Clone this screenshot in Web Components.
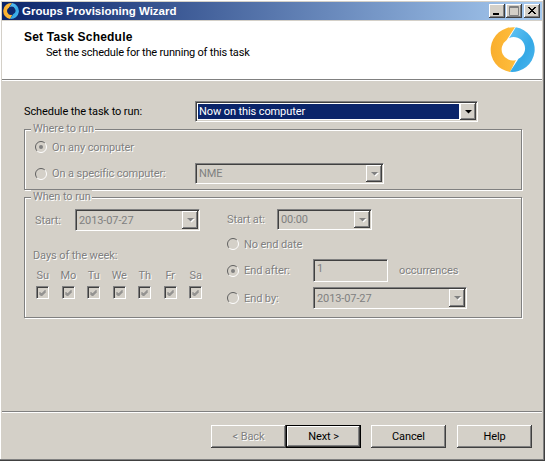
<!DOCTYPE html>
<html>
<head>
<meta charset="utf-8">
<title>Groups Provisioning Wizard</title>
<style>
  html, body { margin: 0; padding: 0; background: #d4d0c8; }
  body { font: 11px Roboto, "Liberation Sans", Arial, sans-serif; color: #000; letter-spacing: -.1px; }
</style>
</head>
<body>

<wiz-window>
  <wiz-titlebar slot="title">Groups Provisioning Wizard</wiz-titlebar>
  <wiz-header slot="header" heading="Set Task Schedule">Set the schedule for the running of this task</wiz-header>

  <schedule-row>
    <span slot="label">Schedule the task to run:</span>
    <wiz-combo slot="combo" selected value="Now on this computer" style="width:283px;height:21px"></wiz-combo>
  </schedule-row>

  <wiz-group legend="Where to run">
    <where-rows>
      <wiz-radio slot="any" checked>On any computer</wiz-radio>
      <wiz-radio slot="specific">On a specific computer:</wiz-radio>
      <wiz-combo slot="computer" disabled value="NME" style="width:189px;height:21px"></wiz-combo>
    </where-rows>
  </wiz-group>

  <wiz-group legend="When to run">
    <when-rows>
      <wiz-combo slot="start" disabled value="2013-07-27" style="width:125px;height:22px"></wiz-combo>
      <wiz-day slot="day">Su</wiz-day>
      <wiz-day slot="day">Mo</wiz-day>
      <wiz-day slot="day">Tu</wiz-day>
      <wiz-day slot="day">We</wiz-day>
      <wiz-day slot="day">Th</wiz-day>
      <wiz-day slot="day">Fr</wiz-day>
      <wiz-day slot="day">Sa</wiz-day>
      <wiz-combo slot="startat" disabled value="00:00" style="width:95px;height:21px"></wiz-combo>
      <wiz-radio slot="noend">No end date</wiz-radio>
      <wiz-radio slot="after" checked>End after:</wiz-radio>
      <wiz-text slot="count" value="1"></wiz-text>
      <wiz-radio slot="by">End by:</wiz-radio>
      <wiz-combo slot="bydate" disabled value="2013-07-27" style="width:154px;height:22px"></wiz-combo>
    </when-rows>
  </wiz-group>

  <wiz-footer slot="footer">
    <wiz-btn disabled>&lt; Back</wiz-btn>
    <wiz-btn default style="margin-right:10px">Next &gt;</wiz-btn>
    <wiz-btn style="margin-right:11px">Cancel</wiz-btn>
    <wiz-btn>Help</wiz-btn>
  </wiz-footer>
</wiz-window>

<script>
const uiFont = '11px Roboto, "Liberation Sans", Arial, sans-serif'

const logoSvg = `
  <svg viewBox="0 0 45 45" width="100%" height="100%" style="display:block">
    <defs>
      <linearGradient id="o" x1="0" y1="0" x2="1" y2="0">
        <stop offset="0" stop-color="#f9ae2e"/><stop offset="1" stop-color="#ffbe3c"/>
      </linearGradient>
      <linearGradient id="b" x1="0" y1="0" x2="1" y2="1">
        <stop offset="0" stop-color="#62c4f4"/><stop offset="0.6" stop-color="#35a9e6"/><stop offset="1" stop-color="#4db6ee"/>
      </linearGradient>
    </defs>
    <path fill="url(#o)" d="M25 .2A22.5 22.5 0 0 0 20 44.9L26 32.9A11 11 0 0 1 16.500 13.300Z"/>
    <path fill="url(#b)" d="M20 44.800A22.5 22.5 0 0 0 25.800 .2L19 11.200A11 11 0 0 1 28.500 31.700Z"/>
  </svg>`

class WizWindow extends HTMLElement {
  constructor () {
    super()
    this.attachShadow({ mode: 'open' }).innerHTML = `
    <style>
      :host{
        background: #d4d0c8;
        box-sizing: border-box;
        display: flex;
        flex-direction: column;
        height: 461px;
        padding: 2px 3px 2px 2px;
        width: 545px;
        box-shadow: inset -1px -1px 0 #404040, inset -2px -2px 0 #808080, inset 1px 1px 0 #fff;
      }
      .content{
        border-top: 1px solid #808080;
        box-shadow: inset 0 1px 0 #fff;
        flex: 1;
        padding: 21px 20px 0 22px;
      }
    </style>
    <slot name="title"></slot>
    <slot name="header"></slot>
    <div class="content"><slot></slot></div>
    <slot name="footer"></slot>`
  }
}

class WizTitlebar extends HTMLElement {
  constructor () {
    super()
    this.attachShadow({ mode: 'open' }).innerHTML = `
    <style>
      :host{
        align-items: center;
        background: linear-gradient(90deg, #0a246a, #a6caf0);
        box-sizing: border-box;
        color: #fff;
        display: flex;
        font: bold 11.5px "Liberation Sans", Arial, sans-serif;
        height: 18px;
        letter-spacing: 0;
        margin-bottom: 1px;
        padding: 0 2px 0 1px;
      }
      .icon{ height: 16px; margin-right: 3px; width: 16px; }
      .text{ flex: 1; }
      .caption{
        align-items: center;
        background: #d4d0c8;
        box-shadow: inset -1px -1px 0 #404040, inset 1px 1px 0 #fff, inset -2px -2px 0 #808080;
        display: flex;
        height: 14px;
        justify-content: center;
        margin-left: 1px;
        width: 16px;
      }
      .close{ margin-left: 2px; }
      svg{ display: block; }
    </style>
    <div class="icon">${logoSvg}</div>
    <div class="text"><slot></slot></div>
    <div class="caption"><svg width="10" height="10"><rect x="1" y="7" width="6" height="2" fill="#000"/></svg></div>
    <div class="caption"><svg width="10" height="10"><path d="M.5 .5h9v9h-9zM.5 1.500h9" fill="none" stroke="#808080"/></svg></div>
    <div class="caption close"><svg width="10" height="10"><path d="M1 1l7 7M2 1l7 7M8 1l-7 7M9 1l-7 7" stroke="#000" fill="none"/></svg></div>`
  }
}

class WizHeader extends HTMLElement {
  constructor () {
    super()
    this.attachShadow({ mode: 'open' }).innerHTML = `
    <style>
      :host{
        background: #fff;
        box-sizing: border-box;
        display: flex;
        height: 58px;
        justify-content: space-between;
        padding: 9px 7px 0 22px;
      }
      h1{
        font: bold 12px "Liberation Sans", Arial, sans-serif;
        letter-spacing: .2px;
        line-height: 15px;
        margin: 0;
      }
      p{
        font: ${uiFont};
        letter-spacing: -.2px;
        line-height: 15px;
        margin: 0 0 0 22px;
      }
      .logo{ height: 45px; margin-top: -3px; width: 45px; }
    </style>
    <div>
      <h1>${this.getAttribute('heading')}</h1>
      <p><slot></slot></p>
    </div>
    <div class="logo">${logoSvg}</div>`
  }
}

class ScheduleRow extends HTMLElement {
  constructor () {
    super()
    this.attachShadow({ mode: 'open' }).innerHTML = `
    <style>
      :host{
        align-items: center;
        display: flex;
        font: ${uiFont};
      }
      .label{ width: 171px; }
    </style>
    <div class="label"><slot name="label"></slot></div>
    <slot name="combo"></slot>`
  }
}

class WizGroup extends HTMLElement {
  constructor () {
    super()
    this.attachShadow({ mode: 'open' }).innerHTML = `
    <style>
      :host{ display: block; }
      fieldset{
        border: 1px solid #808080;
        box-shadow: 1px 1px 0 #fff, inset 1px 1px 0 #fff;
        margin: 0;
        min-width: 0;
        padding: 0;
      }
      legend{
        background: #d4d0c8;
        color: #808080;
        font: ${uiFont};
        line-height: 14px;
        margin-left: 6px;
        padding: 0 1px 0 2px;
        text-shadow: 1px 1px 0 #fff;
      }
    </style>
    <fieldset>
      <legend>${this.getAttribute('legend')}</legend>
      <slot></slot>
    </fieldset>`
  }
}

class WhereRows extends HTMLElement {
  constructor () {
    super()
    this.attachShadow({ mode: 'open' }).innerHTML = `
    <style>
      :host{
        align-items: center;
        display: grid;
        grid-template-columns: 160px 1fr;
        grid-template-rows: 20px 21px;
        row-gap: 6px;
        padding: 1px 0 5px 10px;
      }
      ::slotted([slot="any"]){ grid-column: 1 / 3; }
    </style>
    <slot name="any"></slot>
    <slot name="specific"></slot>
    <slot name="computer"></slot>`
  }
}

class WhenRows extends HTMLElement {
  constructor () {
    super()
    this.attachShadow({ mode: 'open' }).innerHTML = `
    <style>
      :host{
        display: flex;
        font: ${uiFont};
        padding: 5px 0 8px 8px;
      }
      .left{ width: 194px; }
      .row{ align-items: center; display: flex; }
      .muted{ color: #808080; text-shadow: 1px 1px 0 #fff; }
      .start-label{ margin-left: 2px; width: 40px; }
      .days-label{ line-height: 14px; margin-top: 18px; }
      .days{
        display: grid;
        grid-template-columns: repeat(7, 25.5px);
        margin: 6px 0 0 -3px;
      }
      .startat-label{ width: 50px; }
      .no-end{ height: 20px; margin-top: 4px; }
      .after{ height: 23px; margin-top: 5px; }
      .by{ height: 22px; margin-top: 5px; }
      .radio-cell{ width: 86px; }
      .occ{ margin-left: 11px; }
    </style>
    <div class="left">
      <div class="row">
        <span class="muted start-label">Start:</span>
        <slot name="start"></slot>
      </div>
      <div class="muted days-label">Days of the week:</div>
      <div class="days"><slot name="day"></slot></div>
    </div>
    <div class="right">
      <div class="row">
        <span class="muted startat-label">Start at:</span>
        <slot name="startat"></slot>
      </div>
      <div class="row no-end"><slot name="noend"></slot></div>
      <div class="row after">
        <div class="radio-cell"><slot name="after"></slot></div>
        <slot name="count"></slot>
        <span class="muted occ">occurrences</span>
      </div>
      <div class="row by">
        <div class="radio-cell"><slot name="by"></slot></div>
        <slot name="bydate"></slot>
      </div>
    </div>`
  }
}

class WizDay extends HTMLElement {
  constructor () {
    super()
    this.attachShadow({ mode: 'open' }).innerHTML = `
    <style>
      :host{
        align-items: center;
        color: #808080;
        display: flex;
        flex-direction: column;
        font: ${uiFont};
        line-height: 14px;
        text-shadow: 1px 1px 0 #fff;
      }
      .box{
        background: #d4d0c8;
        border-color: #808080 #fff #fff #808080;
        border-style: solid;
        border-width: 1px;
        box-shadow: inset 1px 1px 0 #404040;
        box-sizing: border-box;
        height: 13px;
        margin-top: 3px;
        width: 13px;
      }
      svg{ display: block; }
    </style>
    <slot></slot>
    <div class="box"><svg width="11" height="11"><path d="M2.500 5l2 2 4-4M2.500 6l2 2 4-4M2.500 7l2 2 4-4" fill="none" stroke="#808080"/></svg></div>`
  }
}

class WizRadio extends HTMLElement {
  constructor () {
    super()
    const dot = this.hasAttribute('checked') ? '<circle cx="6" cy="6" r="2" fill="#808080"/>' : ''
    this.attachShadow({ mode: 'open' }).innerHTML = `
    <style>
      :host{
        align-items: center;
        color: #808080;
        display: flex;
        font: ${uiFont};
        text-shadow: 1px 1px 0 #fff;
      }
      svg{ display: block; flex: none; margin-right: 5px; }
    </style>
    <svg width="12" height="12" viewBox="0 0 12 12">
      <path d="M9.900 2.100A5.500 5.500 0 0 0 2.100 9.900" fill="none" stroke="#606060"/>
      <path d="M2.100 9.900A5.500 5.500 0 0 0 9.900 2.100" fill="none" stroke="#fff"/>
      ${dot}
    </svg>
    <slot></slot>`
  }
}

class WizCombo extends HTMLElement {
  constructor () {
    super()
    const disabled = this.hasAttribute('disabled')
    const selected = this.hasAttribute('selected')
    this.attachShadow({ mode: 'open' }).innerHTML = `
    <style>
      :host{
        background: ${disabled ? '#d4d0c8' : '#fff'};
        border-color: #808080 #fff #fff #808080;
        border-style: solid;
        border-width: 1px;
        box-shadow: inset 1px 1px 0 #404040, inset -1px -1px 0 #d4d0c8;
        box-sizing: border-box;
        display: flex;
        font: ${uiFont};
        padding: 1px;
      }
      .value{
        align-items: center;
        color: ${disabled ? '#808080' : '#000'};
        display: flex;
        flex: 1;
        margin: ${selected ? '1px' : '0'};
        padding: 0 ${selected ? '1px' : '2px'};
        min-width: 0;
      }
      .value.selected{ background: #0a246a; color: #fff; }
      .arrow{
        align-items: center;
        background: #d4d0c8;
        box-shadow: inset -1px -1px 0 #404040, inset 1px 1px 0 #fff, inset -2px -2px 0 #808080;
        display: flex;
        flex: none;
        justify-content: center;
        width: 16px;
      }
      svg{ display: block; }
    </style>
    <div class="value ${selected ? 'selected' : ''}">${this.getAttribute('value')}</div>
    <div class="arrow">
      <svg width="9" height="6">
        ${disabled ? '<path d="M2 2h7L5.500 5.500z" fill="#fff"/>' : ''}
        <path d="M1 1h7L4.500 4.500z" fill="${disabled ? '#808080' : '#000'}"/>
      </svg>
    </div>`
  }
}

class WizText extends HTMLElement {
  constructor () {
    super()
    this.attachShadow({ mode: 'open' }).innerHTML = `
    <style>
      :host{
        background: #d4d0c8;
        border-color: #808080 #fff #fff #808080;
        border-style: solid;
        border-width: 1px;
        box-shadow: inset 1px 1px 0 #404040;
        box-sizing: border-box;
        color: #808080;
        display: block;
        font: ${uiFont};
        height: 23px;
        line-height: 16px;
        padding: 1px 3px;
        width: 75px;
      }
    </style>
    ${this.getAttribute('value')}`
  }
}

class WizFooter extends HTMLElement {
  constructor () {
    super()
    this.attachShadow({ mode: 'open' }).innerHTML = `
    <style>
      :host{
        align-items: flex-start;
        border-top: 1px solid #808080;
        box-shadow: inset 0 1px 0 #fff;
        box-sizing: border-box;
        display: flex;
        height: 48px;
        justify-content: flex-end;
        padding: 13px 10px 0 0;
      }
    </style>
    <slot></slot>`
  }
}

class WizBtn extends HTMLElement {
  constructor () {
    super()
    const disabled = this.hasAttribute('disabled')
    const isDefault = this.hasAttribute('default')
    this.attachShadow({ mode: 'open' }).innerHTML = `
    <style>
      :host{ display: block; }
      button{
        all: unset;
        align-items: center;
        background: #d4d0c8;
        box-shadow: ${isDefault
          ? 'inset 0 0 0 1px #000, inset -2px -2px 0 #404040, inset 2px 2px 0 #fff, inset -3px -3px 0 #808080'
          : 'inset -1px -1px 0 #404040, inset 1px 1px 0 #fff, inset -2px -2px 0 #808080'};
        box-sizing: border-box;
        color: ${disabled ? '#808080' : '#000'};
        display: flex;
        font: ${uiFont};
        height: 23px;
        justify-content: center;
        letter-spacing: -.1px;
        text-shadow: ${disabled ? '1px 1px 0 #fff' : 'none'};
        width: 75px;
      }
    </style>
    <button><slot></slot></button>`
  }
}

customElements.define('wiz-window', WizWindow)
customElements.define('wiz-titlebar', WizTitlebar)
customElements.define('wiz-header', WizHeader)
customElements.define('schedule-row', ScheduleRow)
customElements.define('wiz-group', WizGroup)
customElements.define('where-rows', WhereRows)
customElements.define('when-rows', WhenRows)
customElements.define('wiz-day', WizDay)
customElements.define('wiz-radio', WizRadio)
customElements.define('wiz-combo', WizCombo)
customElements.define('wiz-text', WizText)
customElements.define('wiz-footer', WizFooter)
customElements.define('wiz-btn', WizBtn)
</script>
</body>
</html>
